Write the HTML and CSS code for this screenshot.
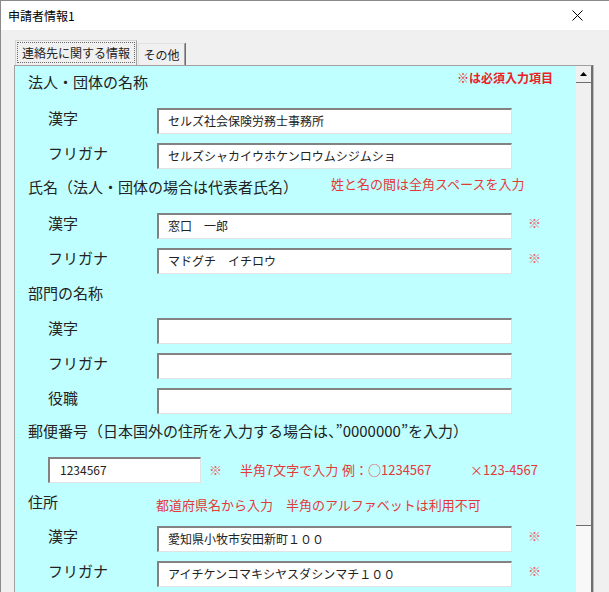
FILE: index.html
```html
<!DOCTYPE html>
<html lang="ja">
<head>
<meta charset="utf-8">
<title>申請者情報1</title>
<link rel="stylesheet" href="styles.css">
</head>
<body>
<div class="window">
  <div class="titlebar">
    <span class="title">申請者情報1</span>
    <svg class="close" width="11" height="11" viewBox="0 0 11 11"><path d="M0.5 0.5 L10.5 10.5 M10.5 0.5 L0.5 10.5" stroke="#000" stroke-width="1" fill="none"/></svg>
  </div>
  <div class="client">
    <div class="tabs">
      <div class="tab active"><span class="focus">連絡先に関する情報</span></div>
      <div class="tab">その他</div>
    </div>
    <div class="frame">
      <div class="page">
        <div class="hrow h1"><span class="heading">法人・団体の名称</span><span class="req">※は必須入力項目</span></div>
        <div class="frow"><span class="label">漢字</span><div class="field">セルズ社会保険労務士事務所</div></div>
        <div class="frow"><span class="label">フリガナ</span><div class="field">セルズシャカイウホケンロウムシジムショ</div></div>

        <div class="hrow h2"><span class="heading">氏名（法人・団体の場合は代表者氏名）</span><span class="note">姓と名の間は全角スペースを入力</span></div>
        <div class="frow"><span class="label">漢字</span><div class="field">窓口　一郎</div><span class="mark">※</span></div>
        <div class="frow"><span class="label">フリガナ</span><div class="field">マドグチ　イチロウ</div><span class="mark">※</span></div>

        <div class="hrow h3"><span class="heading">部門の名称</span></div>
        <div class="frow"><span class="label">漢字</span><div class="field"></div></div>
        <div class="frow"><span class="label">フリガナ</span><div class="field"></div></div>
        <div class="frow"><span class="label">役職</span><div class="field"></div></div>

        <div class="hrow h4"><span class="heading">郵便番号（日本国外の住所を入力する場合は、”0000000”を入力）</span></div>
        <div class="frow prow">
          <div class="field postal">1234567</div>
          <span class="pmark">※</span>
          <span class="pnote p1">半角7文字で入力</span>
          <span class="pnote p2">例：○1234567</span>
          <span class="pnote p3">×123-4567</span>
        </div>

        <div class="hrow h5"><span class="heading">住所</span><span class="note">都道府県名から入力　半角のアルファベットは利用不可</span></div>
        <div class="frow"><span class="label">漢字</span><div class="field">愛知県小牧市安田新町１００</div><span class="mark">※</span></div>
        <div class="frow"><span class="label">フリガナ</span><div class="field">アイチケンコマキシヤスダシンマチ１００</div><span class="mark">※</span></div>
      </div>
      <div class="vscroll">
        <div class="sbtn"><svg width="7" height="4" viewBox="0 0 7 4"><polygon points="0,4 3.5,0 7,4" fill="#000"/></svg></div>
        <div class="thumb"></div>
        <div class="track"></div>
      </div>
    </div>
  </div>
</div>
</body>
</html>
```

FILE: styles.css
```css
* { box-sizing: border-box; }
html, body { margin: 0; padding: 0; }
body {
  width: 609px;
  height: 592px;
  overflow: hidden;
  background: #f0f0f0;
  font-family: "Noto Sans CJK JP", "Noto Sans", sans-serif;
  color: #222;
}
.window {
  width: 609px;
  height: 592px;
  border-top: 1px solid #8a8a8a;
  border-left: 1px solid #8a8a8a;
  display: flex;
  flex-direction: column;
  overflow: hidden;
}
.titlebar {
  flex: none;
  height: 29px;
  background: #fff;
  display: flex;
  align-items: center;
  justify-content: space-between;
  padding: 0 26px 0 7px;
}
.title { font-size: 12px; line-height: 16px; color: #000; }
.close { display: block; }

.client {
  flex: 1;
  min-height: 0;
  padding: 10px 0 0 13px;
  display: flex;
  flex-direction: column;
}
.tabs {
  flex: none;
  height: 25px;
  display: flex;
  align-items: flex-end;
  padding-left: 1px;
}
.tab {
  width: 47px;
  height: 22px;
  border-top: 1px solid #e2e2e2;
  border-left: 1px solid #e2e2e2;
  border-right: 1px solid #a0a0a0;
  box-shadow: 1px 0 0 #6e6e6e;
  background: #f0f0f0;
  font-size: 12px;
  line-height: 16px;
  color: #222;
  display: flex;
  align-items: center;
  justify-content: center;
  margin-left: 1px;
}
.tab.active {
  width: 122px;
  height: 25px;
  margin-left: 0;
  padding: 1px 1px 2px 1px;
  border-top: 1px solid #d4d4d4;
  border-left: 1px solid #d4d4d4;
  border-right: 1px solid #a0a0a0;
  box-shadow: none;
}
.focus {
  width: 100%;
  height: 100%;
  border: 1px dotted #6a6a6a;
  display: flex;
  align-items: center;
  justify-content: center;
  font-size: 12px;
}

.frame {
  flex: 1;
  min-height: 0;
  width: 579px;
  display: flex;
  border-top: 1px solid #a0a0a0;
  border-left: 1px solid #a0a0a0;
  border-right: 2px solid #6e6e6e;
  box-shadow: 1px 0 0 #bdbdbd;
}
.page {
  flex: 1;
  min-width: 0;
  background: #c0ffff;
  overflow: hidden;
  display: flex;
  flex-direction: column;
}
.vscroll {
  flex: none;
  width: 15px;
  display: flex;
  flex-direction: column;
}
.sbtn {
  flex: none;
  height: 17px;
  background: #f0f0f0;
  border-bottom: 1px solid #6e6e6e;
  display: flex;
  justify-content: center;
  padding-top: 6px;
}
.sbtn svg { display: block; }
.thumb {
  flex: none;
  height: 443px;
  background: #f0f0f0;
  border-bottom: 1px solid #6e6e6e;
}
.track { flex: 1; background: #f8f8f8; }

.hrow {
  flex: none;
  display: flex;
  align-items: flex-start;
  padding-left: 13px;
}
.heading {
  font-size: 15px;
  line-height: 20px;
  color: #222;
  white-space: nowrap;
}
.note {
  font-size: 13px;
  line-height: 16px;
  color: #e3393b;
  white-space: nowrap;
}
.req {
  font-size: 12px;
  line-height: 16px;
  font-weight: bold;
  color: #ea2228;
  margin-top: 4px;
}
.h1 { height: 37px; justify-content: space-between; padding-right: 23px; }
.h1 .heading { margin-top: 6px; }
.h2 { height: 35px; }
.h2 .heading { margin-top: 4px; width: 303px; }
.h2 .note { margin-top: 3px; }
.h3 { height: 35px; }
.h3 .heading { margin-top: 5px; }
.h4 { height: 34px; }
.h4 .heading { margin-top: 3px; }
.h5 { height: 34px; }
.h5 .heading { margin-top: 5px; width: 128px; }
.h5 .note { margin-top: 10px; }

.frow {
  flex: none;
  height: 35px;
  display: flex;
  align-items: center;
  padding-left: 33px;
}
.label {
  width: 109px;
  font-size: 15px;
  line-height: 20px;
  padding-bottom: 6px;
  color: #222;
}
.field {
  width: 355px;
  height: 26px;
  background: #fff;
  border-top: 2px solid #828282;
  border-left: 2px solid #828282;
  border-right: 1px solid #e2e2e2;
  border-bottom: 1px solid #e2e2e2;
  padding-left: 9px;
  display: flex;
  align-items: center;
  font-size: 12px;
  line-height: 16px;
  color: #222;
  white-space: nowrap;
  overflow: hidden;
}
.mark {
  margin-left: 16px;
  font-size: 13px;
  line-height: 16px;
  padding-bottom: 6px;
  color: #e66a6a;
}
.field.postal { width: 153px; padding-left: 10px; }
.pmark {
  margin-left: 8px;
  width: 31px;
  font-size: 13px;
  line-height: 16px;
  color: #e66a6a;
}
.pnote {
  font-size: 13px;
  line-height: 16px;
  color: #e3393b;
  white-space: nowrap;
}
.p1 { width: 102px; }
.p2 { width: 128px; }
```
